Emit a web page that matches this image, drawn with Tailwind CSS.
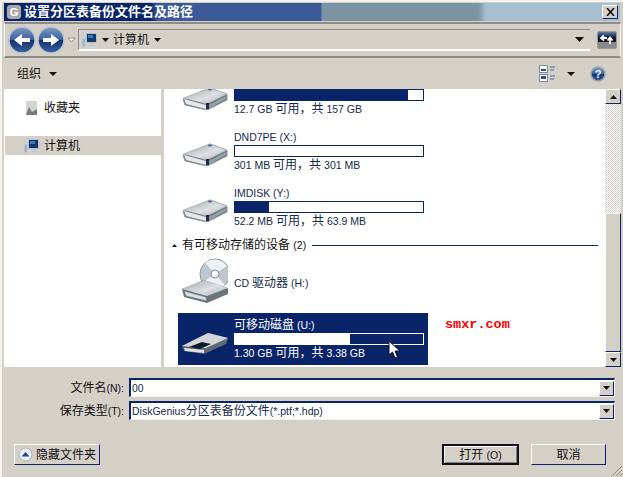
<!DOCTYPE html>
<html lang="zh-CN">
<head>
  <meta charset="UTF-8">
  <title>设置分区表备份文件名及路径</title>
  <script src="https://cdn.jsdelivr.net/npm/@tailwindcss/browser@4"></script>
</head>
<body class="bg-[#d4d0c8] w-[623px] h-[477px] overflow-hidden relative text-[12px] leading-[14px] text-[#111] font-['Liberation_Sans','Noto_Sans_CJK_SC',sans-serif] shadow-[inset_2px_2px_0_#f4f3ef]">

  <svg width="0" height="0" class="absolute">
    <defs>
      <linearGradient id="hddTop" x1="0" y1="0" x2="1" y2="1">
        <stop offset="0" stop-color="#969fa5"/>
        <stop offset="0.55" stop-color="#dde0e2"/>
        <stop offset="1" stop-color="#b0b7bb"/>
      </linearGradient>
      <linearGradient id="ballBlue" x1="0" y1="0" x2="0" y2="1">
        <stop offset="0" stop-color="#7f9cc4"/>
        <stop offset="0.48" stop-color="#3d62a0"/>
        <stop offset="0.5" stop-color="#12306e"/>
        <stop offset="1" stop-color="#3a64a0"/>
      </linearGradient>
      <symbol id="hdd" viewBox="0 0 46 24">
        <path d="M1 12 L28 1 L45 7 L45 13 L25 23 L3 18 Z" fill="#6b757b" stroke="#8f989d" stroke-linejoin="round"/>
        <path d="M1 11 L28 1 L45 7 L25 17 Z" fill="url(#hddTop)" stroke="#a5acb1" stroke-width="0.5" stroke-linejoin="round"/>
        <path d="M2 12 L24 18 L24 22 L4 17 Z" fill="#e6e8e9"/>
        <path d="M27 18 L44 9 L44 12 L27 21 Z" fill="#9aa2a7"/>
        <rect x="24" y="16" width="3" height="6" fill="#1d2b45"/>
        <ellipse cx="28" cy="2.5" rx="2" ry="1" fill="#4b6a9a"/>
      </symbol>
      <symbol id="pc" viewBox="0 0 15 16">
        <rect x="4.5" y="1.5" width="10" height="9" fill="#12386e" stroke="#b4c0c9"/>
        <rect x="6" y="3" width="5" height="3" fill="#3a78b8"/>
        <rect x="0.5" y="6.5" width="2.5" height="8" fill="#8fb2c9" stroke="#b9cbd6" stroke-width="0.5"/>
        <path d="M8 11 H11 V13 H13 V14.5 H6 V13 H8 Z" fill="#c3cbd0"/>
      </symbol>
    </defs>
  </svg>

  <!-- title bar -->
  <div class="absolute left-[4px] right-[3px] top-[3px] h-[18px] flex items-center bg-[linear-gradient(to_right,#0a246a_0,#0a246a_146px,#3c5a98_154px,#3c5a98_317px,#7b94a3_318px,#7b94a3_474px,#a6bfd0_482px)]">
    <span class="ml-[3px] w-[14px] h-[14px] rounded-[3px] bg-[#a8a8a8] text-white text-[11px] leading-[14px] text-center font-bold">G</span>
    <span class="ml-[3px] text-white font-bold text-[13px]">设置分区表备份文件名及路径</span>
    <span class="ml-auto mr-[2px] w-[16px] h-[14px] bg-[#d4d0c8] border-t border-l border-white border-r border-b border-r-[#0a246a] border-b-[#0a246a] flex items-center justify-center">
      <svg width="9" height="8" viewBox="0 0 9 8"><path d="M1 0 L8 8 M8 0 L1 8" stroke="#000" stroke-width="1.4"/></svg>
    </span>
  </div>

  <div class="pt-[22px] pl-[4px] pr-[2px]">
    <!-- address bar -->
    <div class="h-[36px] border-y-2 border-x border-y-[#8f8c85] border-x-[#f4f3ef] flex items-center">
      <div class="flex items-center ml-[3px] gap-[2px] w-[70px] shrink-0">
        <svg width="28" height="28" viewBox="0 0 28 28"><circle cx="14" cy="14" r="13" fill="url(#ballBlue)" stroke="#b9c3cc" stroke-width="1.5"/><path d="M22 12 H14 V8 L6 14 L14 20 V16 H22 Z" fill="#fff"/></svg>
        <svg width="28" height="28" viewBox="0 0 28 28" class="-ml-[1px]"><circle cx="14" cy="14" r="13" fill="url(#ballBlue)" stroke="#b9c3cc" stroke-width="1.5"/><path d="M6 12 H14 V8 L22 14 L14 20 V16 H6 Z" fill="#fff"/></svg>
        <svg width="9" height="6" viewBox="0 0 9 6"><path d="M1 1 H8 L4.5 5 Z" fill="#fff" stroke="#8c8c8c"/></svg>
      </div>
      <div class="h-[22px] w-[512px] border-t border-l border-[#8f8c85] border-b-2 border-b-white flex items-center">
        <svg width="15" height="16" class="ml-[3px]"><use href="#pc"/></svg>
        <svg width="7" height="4" viewBox="0 0 7 4" class="ml-[5px]"><path d="M0 0 H7 L3.5 4 Z" fill="#111"/></svg>
        <span class="ml-[4px]">计算机</span>
        <svg width="7" height="4" viewBox="0 0 7 4" class="ml-[5px]"><path d="M0 0 H7 L3.5 4 Z" fill="#111"/></svg>
        <svg width="9" height="5" viewBox="0 0 9 5" class="ml-auto mr-[6px]"><path d="M0 0 H9 L4.5 5 Z" fill="#111"/></svg>
      </div>
      <div class="ml-[7px] w-[20px] h-[18px] rounded-[2px] border border-[#9a9a9a] bg-[linear-gradient(#5d7fae_0,#10182a_35%,#10182a_60%,#8a8a8a_60%)] flex items-center justify-center">
        <svg width="16" height="12" viewBox="0 0 16 12"><path d="M8 4 H3 M5 1.5 L2 4 L5 6.5 M11 10 V4 M8.5 6.5 L11 3.5 L13.5 6.5" fill="none" stroke="#fff" stroke-width="1.8"/></svg>
      </div>
    </div>

    <!-- toolbar -->
    <div class="h-[31px] flex items-center">
      <span class="ml-[13px]">组织</span>
      <svg width="8" height="4" viewBox="0 0 8 4" class="ml-[8px]"><path d="M0 0 H8 L4 4 Z" fill="#111"/></svg>
      <svg width="17" height="17" viewBox="0 0 17 17" class="ml-auto"><rect x="0.5" y="0.5" width="8" height="7" fill="#fff" stroke="#7a8ca8"/><rect x="2" y="4" width="5" height="2" fill="#3a4f78"/><rect x="0.5" y="9.5" width="8" height="7" fill="#fff" stroke="#7a8ca8"/><rect x="2" y="11" width="5" height="3" fill="#3a4f78"/><path d="M11 2 H16 M11 5 H15 M11 11 H16 M11 14 H15" stroke="#4a64a0"/></svg>
      <svg width="8" height="4" viewBox="0 0 8 4" class="ml-[11px]"><path d="M0 0 H8 L4 4 Z" fill="#111"/></svg>
      <svg width="16" height="16" viewBox="0 0 16 16" class="ml-[15px] mr-[15px]"><circle cx="8" cy="8" r="7" fill="url(#ballBlue)" stroke="#9aa6b0" stroke-width="1.5"/><text x="8" y="12" text-anchor="middle" fill="#fff" font-size="11" font-weight="700" font-family="Liberation Sans">?</text></svg>
    </div>

    <!-- panes -->
    <div class="h-[278px] flex gap-[3px]">
      <div class="w-[157px] shrink-0 bg-white pt-[10px]">
        <div class="flex items-center h-[18px] pl-[21px] gap-[6px]">
          <svg width="13" height="16" viewBox="0 0 13 16"><path d="M1 1 H12 V15 H1 Z" fill="#d3d3cf"/><path d="M1 15 L4 7 L7 12 L12 9 V15 Z" fill="#77797a"/></svg>
          <span>收藏夹</span>
        </div>
        <div class="mt-[19px] ml-[1px] flex items-center h-[19px] pl-[19px] gap-[5px] bg-[#d4d0c8]">
          <svg width="15" height="16"><use href="#pc"/></svg>
          <span>计算机</span>
        </div>
      </div>

      <div class="flex-1 bg-white overflow-hidden">
        <div class="-mt-[20px] ml-[14px] w-[250px] flex flex-col gap-[4px]">
          <div class="h-[52px] flex items-center pl-[4px] pr-[4px]">
            <svg width="46" height="24" class="mt-[8px] shrink-0"><use href="#hdd"/></svg>
            <div class="ml-[6px] w-[190px] text-[#15294d]">
              <div class="h-[13px]"></div>
              <div class="mt-[2px] h-[12px] border border-[#0a246a]"><div class="h-full bg-[#0a246a] w-[92%]"></div></div>
              <div class="mt-[1px]"><span class="text-[10.5px]">12.7 GB </span>可用，共<span class="text-[10.5px]"> 157 GB</span></div>
            </div>
          </div>
          <div class="h-[52px] flex items-center pl-[4px] pr-[4px]">
            <svg width="46" height="24" class="mt-[8px] shrink-0"><use href="#hdd"/></svg>
            <div class="ml-[6px] w-[190px] text-[#15294d]">
              <div class="h-[13px] text-[10.5px]">DND7PE (X:)</div>
              <div class="mt-[2px] h-[12px] border border-[#0a246a]"></div>
              <div class="mt-[1px]"><span class="text-[10.5px]">301 MB </span>可用，共<span class="text-[10.5px]"> 301 MB</span></div>
            </div>
          </div>
          <div class="h-[52px] flex items-center pl-[4px] pr-[4px]">
            <svg width="46" height="24" class="mt-[8px] shrink-0"><use href="#hdd"/></svg>
            <div class="ml-[6px] w-[190px] text-[#15294d]">
              <div class="h-[13px] text-[10.5px]">IMDISK (Y:)</div>
              <div class="mt-[2px] h-[12px] border border-[#0a246a]"><div class="h-full bg-[#0a246a] w-[18%]"></div></div>
              <div class="mt-[1px]"><span class="text-[10.5px]">52.2 MB </span>可用，共<span class="text-[10.5px]"> 63.9 MB</span></div>
            </div>
          </div>
        </div>
        <div class="h-[24px] flex items-center ml-[8px] mr-[7px]">
          <svg width="5" height="3" viewBox="0 0 5 3"><path d="M0 3 L2.5 0 L5 3 Z" fill="#111"/></svg>
          <span class="ml-[5px] text-[#111]">有可移动存储的设备 <span class="text-[10.5px]">(2)</span></span>
          <span class="ml-[6px] flex-1 h-px bg-[#0a246a]"></span>
        </div>
        <div class="ml-[14px] w-[250px] flex flex-col gap-[4px]">
          <div class="h-[52px] flex items-center pl-[4px] pr-[4px] text-[#15294d]">
            <svg width="46" height="46" viewBox="0 0 46 46" class="shrink-0 -mt-[4px]">
              <circle cx="33" cy="16" r="15" fill="#bfc7cc" stroke="#8d979e"/>
              <path d="M33 16 L23 5 A15 15 0 0 1 45 8 Z M33 16 L43 27 A15 15 0 0 1 21 24 Z" fill="#eef1f3"/>
              <circle cx="33" cy="16" r="4" fill="#fff" stroke="#7f8a91"/>
              <path d="M0 31 L22 22 L46 30 L46 36 L25 45 L2 39 Z" fill="#6b757b"/>
              <path d="M0 31 L22 22 L46 30 L25 38 Z" fill="url(#hddTop)"/>
              <path d="M2 33 L24 39 L25 43 L4 38 Z" fill="#dce0e2" stroke="#46607f" stroke-width="0.5"/>
            </svg>
            <span class="ml-[6px]"><span class="text-[10.5px]">CD </span>驱动器<span class="text-[10.5px]"> (H:)</span></span>
          </div>
          <div class="h-[52px] flex items-center pl-[4px] pr-[4px] bg-[#0a246a] text-white">
            <svg width="46" height="24" viewBox="0 0 46 24" class="mt-[10px] shrink-0">
              <path d="M0 14 L26 1 L46 6 L44 12 L22 22 L2 19 Z" fill="#5d6a75"/>
              <path d="M0 14 L26 1 L46 6 L24 16 Z" fill="#d2d6d8"/>
              <path d="M7 15 L20 10 L29 12 L18 17 Z" fill="#0f1a30"/>
              <path d="M2 16 L22 18 L22 21 L3 19 Z" fill="#dfe2e3"/>
            </svg>
            <div class="ml-[6px] w-[190px]">
              <div class="h-[13px]">可移动磁盘<span class="text-[10.5px]"> (U:)</span></div>
              <div class="mt-[2px] h-[12px] border border-white"><div class="h-full bg-white w-[61%]"></div></div>
              <div class="mt-[1px]"><span class="text-[10.5px]">1.30 GB </span>可用，共<span class="text-[10.5px]"> 3.38 GB</span></div>
            </div>
          </div>
        </div>
      </div>

      <!-- scrollbar -->
      <div class="w-[16px] -ml-[3px] shrink-0 flex flex-col">
        <div class="h-[15px] bg-[#d4d0c8] border border-t-white border-l-white border-r-[#0a246a] border-b-[#0a246a] flex items-center justify-center">
          <svg width="7" height="4" viewBox="0 0 7 4"><path d="M0 4 H7 L3.5 0 Z" fill="#111"/></svg>
        </div>
        <div class="h-[109px] bg-[repeating-conic-gradient(#d4d0c8_0_25%,#fff_0_50%)] bg-[length:2px_2px]"></div>
        <div class="flex-1 bg-[#d4d0c8] border border-t-white border-l-white border-r-[#0a246a] border-b-[#0a246a]"></div>
        <div class="h-[15px] bg-[#d4d0c8] border border-t-white border-l-white border-r-[#0a246a] border-b-[#0a246a] flex items-center justify-center">
          <svg width="7" height="4" viewBox="0 0 7 4"><path d="M0 0 H7 L3.5 4 Z" fill="#111"/></svg>
        </div>
      </div>
    </div>

    <!-- file name fields -->
    <div class="mt-[11px] grid grid-cols-[120px_486px] gap-x-[5px] gap-y-[4px] items-center">
      <span class="text-right">文件名<span class="text-[10.5px]">(N):</span></span>
      <div class="h-[19px] bg-white border-t-2 border-l-2 border-t-[#0a246a] border-l-[#0a246a] border-b border-r border-b-[#f4f3ef] border-r-[#f4f3ef] flex items-center pl-[1px]">
        <span class="text-[#15294d] text-[10.5px]">00</span>
        <span class="ml-auto w-[15px] h-[15px] bg-[#d4d0c8] border border-t-white border-l-white border-r-[#0a246a] border-b-[#0a246a] flex items-center justify-center">
          <svg width="7" height="4" viewBox="0 0 7 4"><path d="M0 0 H7 L3.5 4 Z" fill="#111"/></svg>
        </span>
      </div>
      <span class="text-right">保存类型<span class="text-[10.5px]">(T):</span></span>
      <div class="h-[19px] bg-white border-t-2 border-l-2 border-t-[#0a246a] border-l-[#0a246a] border-b border-r border-b-[#f4f3ef] border-r-[#f4f3ef] flex items-center pl-[1px]">
        <span class="text-[#15294d]"><span class="text-[10.5px]">DiskGenius</span>分区表备份文件<span class="text-[10.5px]">(*.ptf;*.hdp)</span></span>
        <span class="ml-auto w-[15px] h-[15px] bg-[#d4d0c8] border border-t-white border-l-white border-r-[#0a246a] border-b-[#0a246a] flex items-center justify-center">
          <svg width="7" height="4" viewBox="0 0 7 4"><path d="M0 0 H7 L3.5 4 Z" fill="#111"/></svg>
        </span>
      </div>
    </div>

    <!-- buttons -->
    <div class="mt-[24px] ml-[10px] mr-[15px] flex items-center">
      <button class="h-[21px] w-[86px] border border-t-white border-l-white border-r-[#0a246a] border-b-[#0a246a] flex items-center pl-[3px] gap-[3px]">
        <svg width="15" height="15" viewBox="0 0 15 15"><circle cx="7.5" cy="7.5" r="6.5" fill="#e8edf2" stroke="#a9b4bf"/><path d="M3.5 9.5 L7.5 5 L11.5 9.5 Z" fill="#26478a"/></svg>
        <span>隐藏文件夹</span>
      </button>
      <button class="ml-auto h-[21px] w-[77px] border-2 border-[#10121c] shadow-[inset_1px_1px_0_#fff,inset_-1px_-1px_0_#808080] flex items-center justify-center">打开&nbsp;<span class="text-[10.5px]">(O)</span></button>
      <button class="ml-[12px] h-[21px] w-[75px] border border-t-white border-l-white border-r-[#0a246a] border-b-[#0a246a]">取消</button>
    </div>
  </div>

  <!-- resize grip -->
  <svg width="12" height="12" viewBox="0 0 12 12" class="absolute right-0 bottom-0"><path d="M11 1 L1 11 M11 5 L5 11 M11 9 L9 11" stroke="#8f8c85"/></svg>

  <!-- watermark + mouse pointer sit over the list -->
  <span class="absolute left-[445px] top-[318px] text-[13.5px] leading-[14px] font-bold text-[#ff0000] font-['Liberation_Mono',monospace]">smxr.com</span>
  <svg width="13" height="19" viewBox="0 0 13 19" class="absolute left-[388px] top-[340px]"><path d="M1 1 V15 L4.5 12 L7 18 L9.5 17 L7 11 H12 Z" fill="#fff" stroke="#111"/></svg>
</body>
</html>
